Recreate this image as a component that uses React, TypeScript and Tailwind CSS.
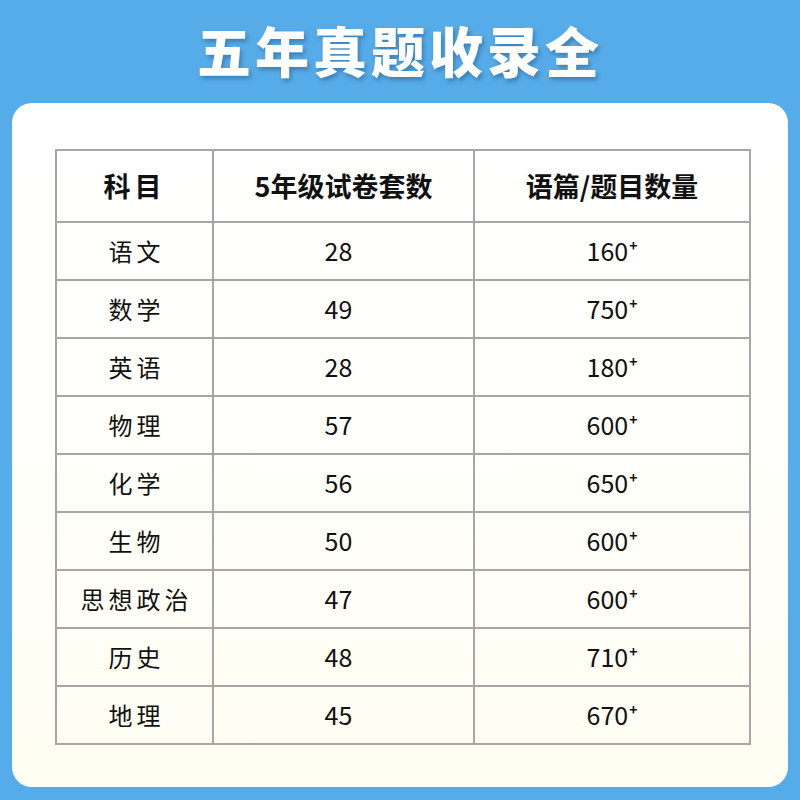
import React from "react"

const rows = [
  { subject: "语文", sets: "28", count: "160" },
  { subject: "数学", sets: "49", count: "750" },
  { subject: "英语", sets: "28", count: "180" },
  { subject: "物理", sets: "57", count: "600" },
  { subject: "化学", sets: "56", count: "650" },
  { subject: "生物", sets: "50", count: "600" },
  { subject: "思想政治", sets: "47", count: "600" },
  { subject: "历史", sets: "48", count: "710" },
  { subject: "地理", sets: "45", count: "670" },
]

const font = { fontFamily: '"Noto Sans CJK SC", "Noto Sans", sans-serif' }

export default function App() {
  return (
    <div className="w-[800px] h-[800px] bg-[#56ace8] flex flex-col" style={font}>
      {/* 标题 */}
      <div className="h-[103px] flex items-center justify-center pb-[4px]">
        <h1 className="text-white text-[54px] font-black tracking-[4px] leading-none [text-shadow:2px_3px_4px_rgba(10,50,100,0.35)]">
          五年真题收录全
        </h1>
      </div>

      {/* 表格卡片 */}
      <div className="mx-[12px] h-[684px] rounded-[20px] bg-gradient-to-b from-white via-[#fffffb] to-[#fffef2] pt-[46px] pl-[43px]">
        <table className="border-collapse border-2 border-[#a6a6a6] text-[#111]">
          <thead>
            <tr className="h-[72px]">
              <th className="w-[157px] border-2 border-[#a6a6a6] text-[27px] font-bold tracking-[4px]">科目</th>
              <th className="w-[261px] border-2 border-[#a6a6a6] text-[27px] font-bold">5年级试卷套数</th>
              <th className="w-[276px] border-2 border-[#a6a6a6] text-[27px] font-bold">语篇/题目数量</th>
            </tr>
          </thead>
          <tbody>
            {rows.map((r) => (
              <tr key={r.subject} className="h-[58px]">
                <td className="border-2 border-[#a6a6a6] text-center text-[24px] tracking-[4px] pl-[4px]">{r.subject}</td>
                <td className="border-2 border-[#a6a6a6] text-center text-[25px] pr-[10px]">{r.sets}</td>
                <td className="border-2 border-[#a6a6a6] text-center text-[25px]">
                  {r.count}
                  <span className="relative -top-[10px] text-[14px] font-bold ml-[1px]">+</span>
                </td>
              </tr>
            ))}
          </tbody>
        </table>
      </div>
    </div>
  )
}
